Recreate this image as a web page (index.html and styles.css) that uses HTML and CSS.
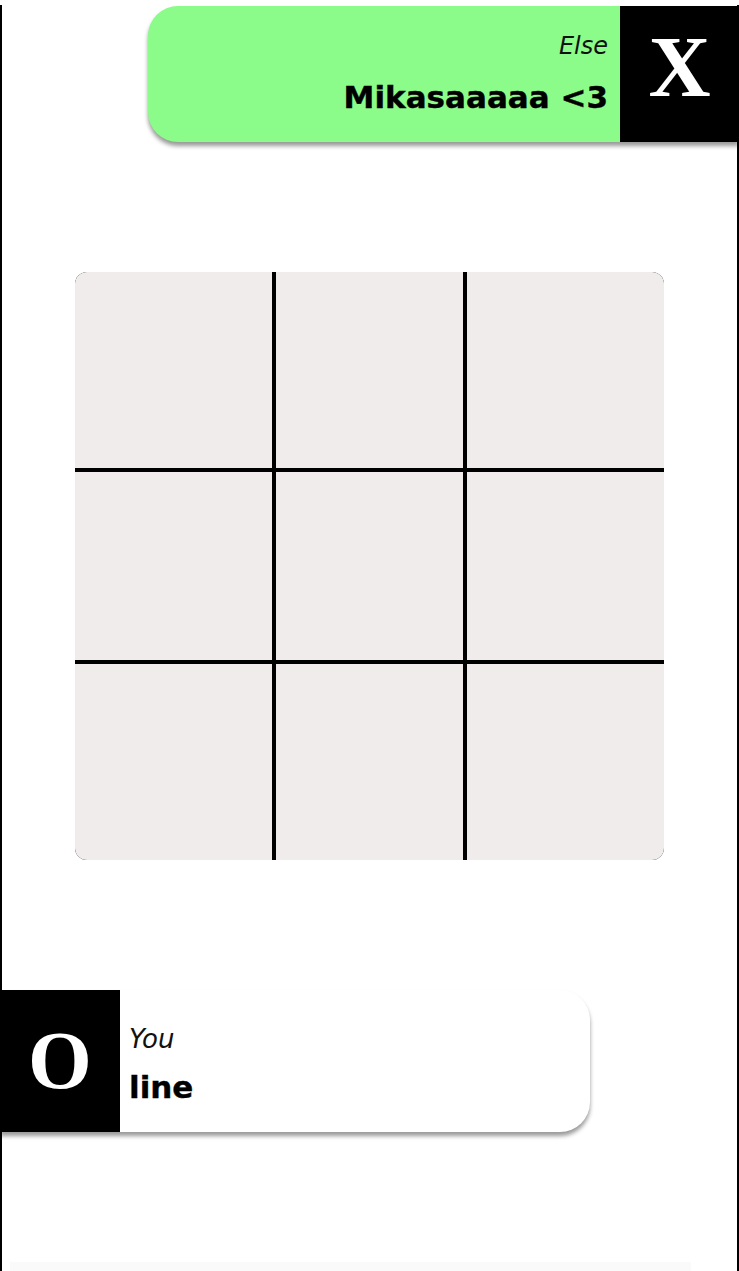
FILE: index.html
```html
<!DOCTYPE html>
<html>
<head>
<meta charset="utf-8">
<link rel="stylesheet" href="styles.css">
</head>
<body>
<div class="page">
  <div class="player player-top">
    <div class="info info-right">
      <span class="label">Else</span>
      <span class="name">Mikasaaaaa &lt;3</span>
    </div>
    <div class="mark">X</div>
  </div>

  <div class="board">
    <div class="cell"></div><div class="cell"></div><div class="cell"></div>
    <div class="cell"></div><div class="cell"></div><div class="cell"></div>
    <div class="cell"></div><div class="cell"></div><div class="cell"></div>
  </div>

  <div class="player player-bottom">
    <div class="mark">O</div>
    <div class="info info-left">
      <span class="label">You</span>
      <span class="name">line</span>
    </div>
  </div>

  <div class="footer"></div>
</div>
</body>
</html>
```

FILE: styles.css
```css
html, body {
  margin: 0;
  padding: 0;
  background: #fff;
  overflow: hidden;
}

.page {
  margin-top: 5px;
  height: 1266px;
  overflow: hidden;
  border-left: 2px solid #000;
  border-right: 2px solid #000;
  display: flex;
  flex-direction: column;
  font-family: "DejaVu Sans", "Noto Sans", sans-serif;
}

.player {
  display: flex;
  flex: none;
  height: 136px;
  box-shadow: 0 4px 4px rgba(0, 0, 0, 0.4);
}

.player-top {
  margin-top: 1px;
  margin-left: auto;
  margin-right: -2px;
  width: 591px;
  background: #8bfb8a;
  border-radius: 30px 0 0 30px;
}

.player-bottom {
  margin-top: 130px;
  margin-left: -2px;
  width: 590px;
  height: 142px;
  background: #fff;
  border-radius: 0 30px 30px 0;
}

.mark {
  width: 119px;
  flex: none;
  background: #000;
  color: #fff;
  font-family: "Liberation Serif", "Times New Roman", serif;
  font-weight: bold;
  font-size: 86px;
  display: flex;
  align-items: center;
  justify-content: center;
  line-height: 1;
  padding-bottom: 14px;
  box-sizing: border-box;
}

.player-bottom .mark {
  width: 120px;
  font-size: 82px;
  padding-bottom: 0;
}

.info {
  flex: 1;
  display: flex;
  flex-direction: column;
  justify-content: center;
}

.info-right {
  align-items: flex-end;
  padding-right: 12px;
  gap: 16px;
}

.info-left {
  align-items: flex-start;
  padding-left: 9px;
  padding-top: 9px;
  gap: 13px;
}

.label {
  font-style: italic;
  font-size: 24px;
  line-height: 30px;
  color: #111;
}

.info-left .label {
  font-size: 26px;
}

.name {
  font-weight: 700;
  font-size: 31px;
  line-height: 40px;
  color: #000;
  -webkit-text-stroke: 0.4px #000;
}

.board {
  flex: none;
  margin: 130px auto 0;
  width: 589px;
  height: 588px;
  display: grid;
  grid-template-columns: 197px 187px 197px;
  grid-template-rows: 196px 188px 196px;
  gap: 4px;
  background: #000;
  border-radius: 12px;
  overflow: hidden;
}

.cell {
  background: #efeceb;
}

.footer {
  flex: none;
  margin: 130px 46px 0 8px;
  height: 60px;
  background: #fafafa;
}
```
